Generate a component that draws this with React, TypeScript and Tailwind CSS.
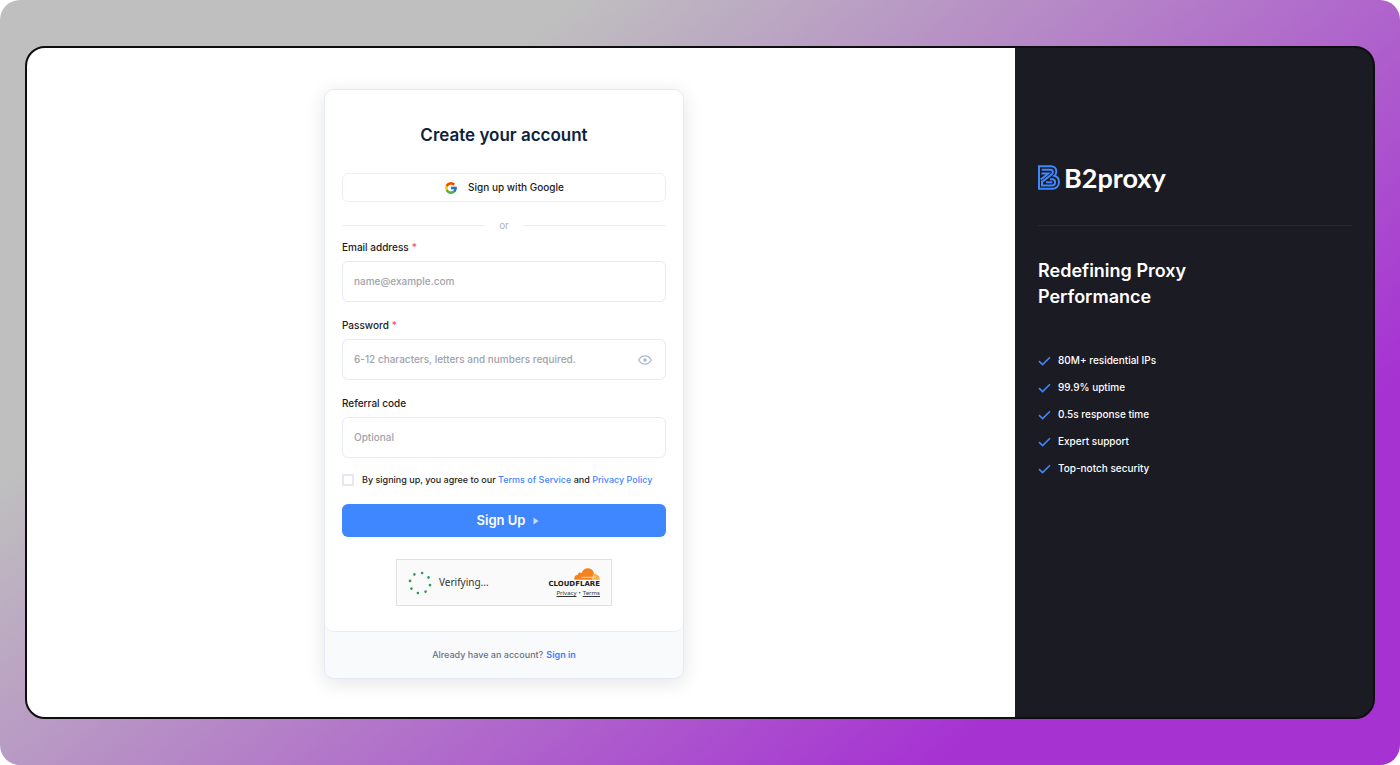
import { useState } from 'react'
import type { ReactNode } from 'react'
import { FcGoogle } from 'react-icons/fc'
import { clsx } from 'clsx'

const FEATURES = [
  '80M+ residential IPs',
  '99.9% uptime',
  '0.5s response time',
  'Expert support',
  'Top-notch security',
]

const SPINNER_DOTS = [12, 57, 102, 147, 192, 237, 282, 327]

function EyeIcon() {
  return (
    <svg viewBox="0 0 14 10" className="w-[14px] h-[10px]" fill="none" stroke="#a9b8d3" strokeWidth="1.3">
      <path d="M.8 5C2.2 2.3 4.4 .9 7 .9S11.8 2.3 13.2 5C11.8 7.7 9.6 9.1 7 9.1S2.2 7.7.8 5Z" />
      <circle cx="7" cy="5" r="1.1" fill="#a9b8d3" />
    </svg>
  )
}

function BrandMark() {
  return (
    <svg viewBox="0 0 66 74" className="w-[22px] h-[25px]" fill="none" stroke="#3f87ff" strokeWidth="6" aria-hidden="true">
      <path d="M3 3H39C49 3 55 10 55 19C55 25 53 29 49 32C57 34 63 41 63 51C63 63 54 71 43 71H3Z" />
      <path d="M11 14H37C46 14 47 23 41 28L12 50V61H42C54 61 54 43 44 42L36 42" />
      <path d="M10 25H31L8 43" />
      <path d="M24 51H43" />
    </svg>
  )
}

function CloudflareLogo() {
  return (
    <div className="flex flex-col items-end">
      <svg viewBox="0 0 78 36" className="w-[26px] h-[12px]" aria-hidden="true">
        <path
          d="M1 35C-1 26 5 20 12 20C11 14 19 11 23 15C27 4 36 0 43 1C53 2 59 9 60 18C62 21 61 27 57 29L55 35Z"
          fill="#f6821f"
        />
        <path d="M58 18C69 16 78 24 77 35H55L59 29C61 25 60 21 58 18Z" fill="#fbad41" />
        <path d="M22 28H57L64 26M59 20L56 31" stroke="#fff" strokeWidth="2" fill="none" />
      </svg>
      <span className="font-['DejaVu_Sans',sans-serif] text-[7px] leading-[8px] font-bold text-[#1d1d1d]">CLOUDFLARE</span>
    </div>
  )
}

function Spinner() {
  return (
    <svg viewBox="0 0 24 24" className="w-6 h-6" fill="#259a51" role="img" aria-label="Loading">
      {SPINNER_DOTS.map((deg) => (
        <circle key={deg} cx="12" cy="1.8" r="1.3" transform={`rotate(${deg} 12 12)`} />
      ))}
    </svg>
  )
}

interface FieldProps {
  id: string
  label: string
  type?: string
  placeholder: string
  required?: boolean
  children?: ReactNode
}

function Field({ id, label, type = 'text', placeholder, required, children }: FieldProps) {
  return (
    <div>
      <label htmlFor={id} className="block text-[10px] leading-4 font-medium text-[#1c1c1c]">
        {label}
        {required && <span className="ml-[3px] text-[#ff4d5e]">*</span>}
      </label>
      <div className="mt-[6px] flex items-center h-[41px] pl-[11px] pr-[13px] rounded-md border border-[#e6ebf6] focus-within:border-[#3f87ff]">
        <input
          id={id}
          type={type}
          placeholder={placeholder}
          className="flex-1 min-w-0 bg-transparent text-[10px] font-medium text-[#1c1c1c] placeholder:text-[#a0a3ab] outline-none"
        />
        {children}
      </div>
    </div>
  )
}

function SignUpCard() {
  const [showPassword, setShowPassword] = useState(false)
  const [agreed, setAgreed] = useState(false)

  return (
    <div className="w-full max-w-[360px] rounded-[10px] border border-[#e4eaf6] bg-[#f8fafc] shadow-[0_4px_20px_rgba(0,0,0,0.11)]">
      <form
        className="px-[17px] pt-[33px] pb-[25px] rounded-[9px] border-b border-[#e4eaf6] bg-white"
        onSubmit={(e) => e.preventDefault()}
      >
        <h1 className="text-center text-[17px] leading-6 font-semibold text-[#0b2341]">Create your account</h1>

        <button
          type="button"
          className="mt-[26px] w-full h-[29px] flex items-center justify-center gap-[10px] rounded-md border border-[#e9eef8] text-[10px] font-medium text-[#1c1c1c]"
        >
          <FcGoogle className="w-[14px] h-[14px]" />
          Sign up with Google
        </button>

        <div className="mt-[15px] flex items-center gap-[14px] text-[10px] leading-4 text-[#a9b3c6]">
          <span className="flex-1 h-px bg-[#ebedf2]" />
          or
          <span className="flex-1 h-px bg-[#ebedf2]" />
        </div>

        <div className="mt-[6px] flex flex-col gap-[15px]">
          <Field id="email" label="Email address" type="email" placeholder="name@example.com" required />
          <Field
            id="password"
            label="Password"
            type={showPassword ? 'text' : 'password'}
            placeholder="6-12 characters, letters and numbers required."
            required
          >
            <button type="button" aria-label="Show password" onClick={() => setShowPassword(!showPassword)}>
              <EyeIcon />
            </button>
          </Field>
          <Field id="referral" label="Referral code" placeholder="Optional" />
        </div>

        <div className="mt-[14px] flex items-center gap-2 text-[9px] leading-4 font-medium text-[#1c1c1c]">
          <input
            id="agree"
            type="checkbox"
            checked={agreed}
            onChange={(e) => setAgreed(e.target.checked)}
            className={clsx(
              'appearance-none shrink-0 w-3 h-3 border-2',
              agreed ? 'bg-[#3f87ff] border-[#3f87ff]' : 'border-[#e4e7f5]'
            )}
          />
          <label htmlFor="agree" className="whitespace-nowrap">
            By signing up, you agree to our{' '}
            <a href="#terms" className="text-[#3f87ff]">Terms of Service</a> and{' '}
            <a href="#privacy" className="text-[#3f87ff]">Privacy Policy</a>
          </label>
        </div>

        <button
          type="submit"
          className="mt-4 w-full h-[33px] pl-2 flex items-center justify-center gap-2 rounded-md bg-[#3f87ff] text-[13px] font-semibold text-white"
        >
          Sign Up
          <svg viewBox="0 0 6 8" className="w-[6px] h-2 opacity-70" fill="currentColor" aria-hidden="true">
            <path d="M.5 .5L5.5 4L.5 7.5Z" />
          </svg>
        </button>

        {/* Turnstile widget */}
        <div className="mt-[22px] mx-auto w-[216px] h-[47px] px-[11px] flex items-center border border-[#e0e0e0] bg-[#fafafa]">
          <Spinner />
          <span className="ml-[7px] font-['Noto_Sans',sans-serif] text-[10px] text-[#333]">Verifying...</span>
          <div className="ml-auto flex flex-col items-end gap-px">
            <CloudflareLogo />
            <div className="flex gap-[2px] font-['Noto_Sans',sans-serif] text-[6px] leading-[8px] text-[#333]">
              <a href="#cf-privacy" className="underline">Privacy</a>
              <span>•</span>
              <a href="#cf-terms" className="underline">Terms</a>
            </div>
          </div>
        </div>
      </form>

      <p className="h-[46px] flex items-center justify-center gap-[3px] text-[9px] font-medium text-[#6b7280]">
        Already have an account?
        <a href="#signin" className="font-semibold text-[#3f7cff]">Sign in</a>
      </p>
    </div>
  )
}

function BrandPanel() {
  return (
    <aside className="w-[358px] shrink-0 pl-[23px] pr-[21px] pt-[117px] bg-[#1b1b24] text-white">
      <div className="flex items-start gap-1 h-8">
        <BrandMark />
        <span className="font-['Lato',sans-serif] text-[27px] leading-[26px] font-bold">B2proxy</span>
      </div>
      <hr className="mt-7 border-[#292932]" />
      <h2 className="mt-8 max-w-[180px] text-[18px] leading-[26px] font-semibold">Redefining Proxy Performance</h2>
      <ul className="mt-[42px] flex flex-col gap-[11px]">
        {FEATURES.map((feature) => (
          <li key={feature} className="flex items-center gap-[7px] text-[10px] leading-4 font-medium">
            <svg viewBox="0 0 13 10" className="w-[13px] h-[10px] mt-[2px]" fill="none" stroke="#3f87ff" strokeWidth="1.6">
              <path d="M1 5.2L4.6 8.6L12 1.2" />
            </svg>
            {feature}
          </li>
        ))}
      </ul>
    </aside>
  )
}

export default function App() {
  return (
    <div className="min-h-screen bg-white font-['Inter',sans-serif]">
      <div className="min-h-screen flex px-[25px] py-[46px] rounded-[20px] bg-[linear-gradient(140deg,#bfbfbf_25%,#a632d2_80%)]">
        <div className="flex-1 flex rounded-[20px] border-2 border-[#0e0e10] bg-[#0e0e10] overflow-hidden">
          <main className="flex-1 flex justify-center items-start pt-[41px] pb-9 pr-[34px] bg-white">
            <SignUpCard />
          </main>
          <BrandPanel />
        </div>
      </div>
    </div>
  )
}
